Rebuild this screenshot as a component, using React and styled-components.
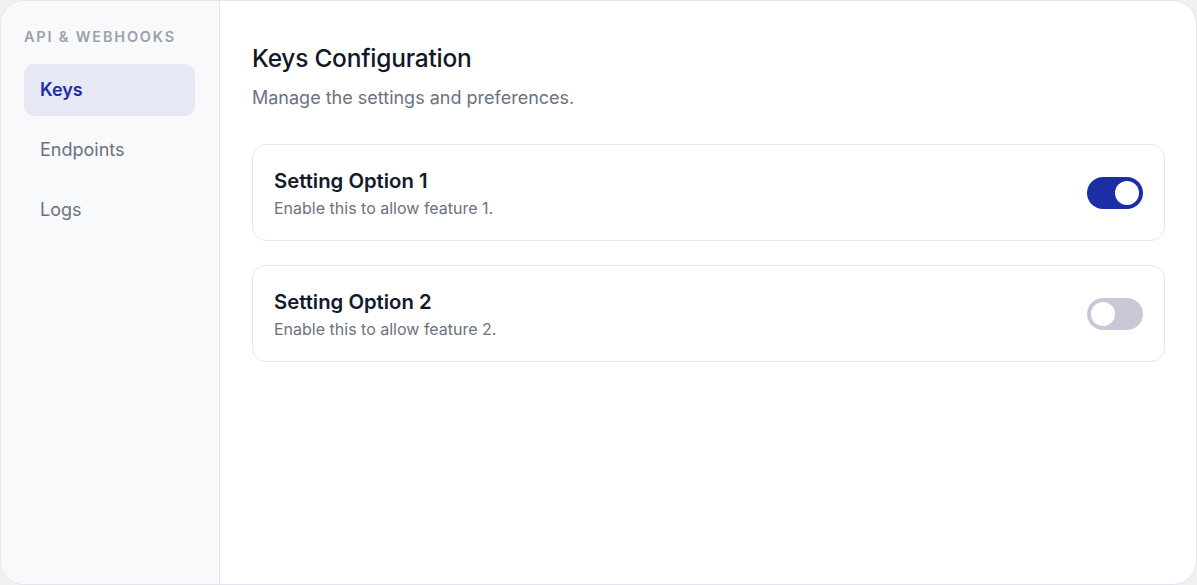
import React, { useState } from 'react';
import styled, { createGlobalStyle } from 'styled-components';

const GlobalStyle = createGlobalStyle`
  html, body {
    margin: 0;
    padding: 0;
    background: #f1f1f4;
  }
  body {
    font-family: Inter, 'Noto Sans', sans-serif;
    -webkit-font-smoothing: antialiased;
  }
  * {
    box-sizing: border-box;
  }
`;

const navItems = [
  { text: 'Keys', id: 'keys' },
  { text: 'Endpoints', id: 'endpoints' },
  { text: 'Logs', id: 'logs' },
];

const initialSettings = [
  { id: 1, title: 'Setting Option 1', desc: 'Enable this to allow feature 1.', on: true },
  { id: 2, title: 'Setting Option 2', desc: 'Enable this to allow feature 2.', on: false },
];

export default function App() {
  const [active, setActive] = useState('keys');
  const [settings, setSettings] = useState(initialSettings);

  const toggle = (id) =>
    setSettings((list) => list.map((s) => (s.id === id ? { ...s, on: !s.on } : s)));

  return (
    <>
      <GlobalStyle />
      <Shell>
        <Sidebar>
          <SectionLabel>API &amp; Webhooks</SectionLabel>
          <NavList>
            {navItems.map((item) => (
              <NavItem
                key={item.id}
                $active={active === item.id}
                onClick={() => setActive(item.id)}
              >
                {item.text}
              </NavItem>
            ))}
          </NavList>
        </Sidebar>
        <Content>
          <Title>Keys Configuration</Title>
          <Subtitle>Manage the settings and preferences.</Subtitle>
          <CardList>
            {settings.map((s) => (
              <Card key={s.id}>
                <CardText>
                  <CardTitle>{s.title}</CardTitle>
                  <CardDesc>{s.desc}</CardDesc>
                </CardText>
                <Switch
                  role="switch"
                  aria-checked={s.on}
                  $on={s.on}
                  onClick={() => toggle(s.id)}
                >
                  <Knob $on={s.on} />
                </Switch>
              </Card>
            ))}
          </CardList>
        </Content>
      </Shell>
    </>
  );
}

const Shell = styled.div`
  display: flex;
  width: 1197px;
  height: 585px;
  background: #ffffff;
  border: 1px solid #e3e3ea;
  border-radius: 24px;
  overflow: hidden;
`;

const Sidebar = styled.aside`
  width: 219px;
  flex-shrink: 0;
  background: #f8f9fb;
  border-right: 1px solid #e2e4ec;
  padding: 27px 24px 0 23px;
`;

const SectionLabel = styled.div`
  font-size: 14.5px;
  font-weight: 600;
  letter-spacing: 0.125em;
  text-transform: uppercase;
  color: #9ca0ae;
  line-height: 18px;
  margin-bottom: 18px;
`;

const NavList = styled.nav`
  display: flex;
  flex-direction: column;
  gap: 8px;
`;

const NavItem = styled.button`
  height: 52px;
  width: 100%;
  border: none;
  border-radius: 10px;
  padding: 0 16px 1px;
  text-align: left;
  cursor: pointer;
  font-family: inherit;
  font-size: 18px;
  font-weight: ${(p) => (p.$active ? 600 : 400)};
  color: ${(p) => (p.$active ? '#1e2ea6' : '#6b7182')};
  background: ${(p) => (p.$active ? '#e6e8f4' : 'transparent')};
`;

const Content = styled.main`
  flex: 1;
  padding: 42px 31px 0 32px;
`;

const Title = styled.h1`
  margin: 0;
  font-size: 24.5px;
  font-weight: 500;
  letter-spacing: -0.01em;
  color: #111827;
  line-height: 30px;
`;

const Subtitle = styled.p`
  margin: 12px 0 0;
  font-size: 18px;
  color: #6b7280;
  line-height: 26px;
`;

const CardList = styled.div`
  display: flex;
  flex-direction: column;
  gap: 24px;
  margin-top: 33px;
`;

const Card = styled.div`
  display: flex;
  align-items: center;
  justify-content: space-between;
  height: 97px;
  padding: 0 21px 0 21px;
  border: 1.5px solid #e6e6ee;
  border-radius: 14px;
  background: #ffffff;
`;

const CardText = styled.div`
  display: flex;
  flex-direction: column;
  gap: 3px;
  padding-top: 1px;
`;

const CardTitle = styled.div`
  font-size: 20.3px;
  font-weight: 600;
  color: #131a2c;
  line-height: 26px;
`;

const CardDesc = styled.div`
  font-size: 16px;
  color: #6b7280;
  line-height: 22px;
`;

const Switch = styled.button`
  position: relative;
  width: 56px;
  height: 32px;
  border: none;
  border-radius: 16px;
  padding: 0;
  cursor: pointer;
  background: ${(p) => (p.$on ? '#1c2ea6' : '#c8c8d6')};
`;

const Knob = styled.span`
  position: absolute;
  top: 4px;
  left: ${(p) => (p.$on ? '28px' : '4px')};
  width: 24px;
  height: 24px;
  border-radius: 50%;
  background: #ffffff;
`;
